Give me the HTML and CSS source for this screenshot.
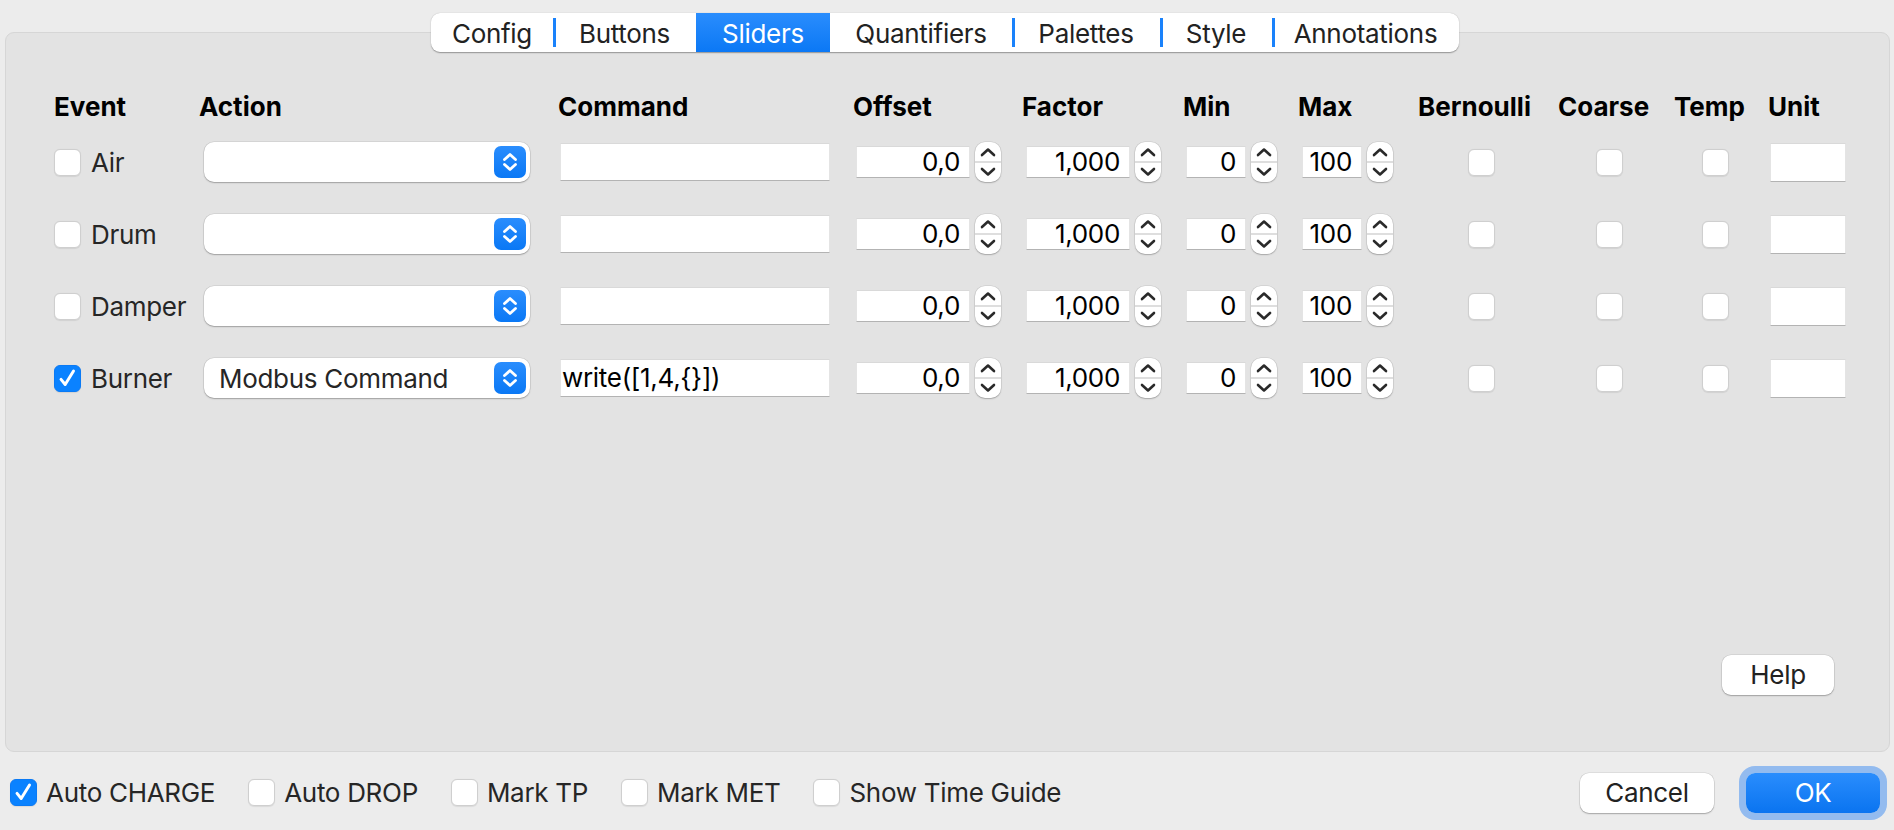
FILE: index.html
```html
<!DOCTYPE html>
<html>
<head>
<meta charset="utf-8">
<link rel="stylesheet" href="styles.css">
</head>
<body>
<div class="window">
  <div class="tabbar">
    <div class="tab t-config">Config</div>
    <div class="tab mark t-buttons">Buttons</div>
    <div class="tab sel t-sliders">Sliders</div>
    <div class="tab t-quant">Quantifiers</div>
    <div class="tab mark t-pal">Palettes</div>
    <div class="tab mark t-style">Style</div>
    <div class="tab mark t-ann">Annotations</div>
  </div>
  <div class="panel">
    <div class="grid hdr">
      <div>Event</div><div>Action</div><div>Command</div><div>Offset</div><div>Factor</div><div>Min</div><div>Max</div><div>Bernoulli</div><div>Coarse</div><div>Temp</div><div>Unit</div>
    </div>
    <div class="grid rows" id="rows"></div>
    <div class="helprow"><button class="btn">Help</button></div>
  </div>
  <div class="bottom">
    <div class="opts">
      <label class="opt"><span class="cb on"><svg viewBox="0 0 27 27"><path d="M6.5 14.5 L11 20 L20 5.5" fill="none" stroke="#fff" stroke-width="3.2" stroke-linecap="round" stroke-linejoin="round"/></svg></span>Auto CHARGE</label>
      <label class="opt"><span class="cb"></span>Auto DROP</label>
      <label class="opt"><span class="cb"></span>Mark TP</label>
      <label class="opt"><span class="cb"></span>Mark MET</label>
      <label class="opt"><span class="cb"></span>Show Time Guide</label>
    </div>
    <div class="actions">
      <button class="btn">Cancel</button>
      <button class="btn ok">OK</button>
    </div>
  </div>
</div>
<template id="rowtpl">
  <div class="c-ev"><span class="cb"></span><span class="lbl"></span></div>
  <div class="c-act"><div class="combo"><span class="ctext"></span><span class="carrow"><svg viewBox="0 0 32 32"><path d="M10.5 13.5 L16 8.5 L21.5 13.5 M10.5 18.5 L16 23.5 L21.5 18.5" fill="none" stroke="#fff" stroke-width="2.8" stroke-linecap="round" stroke-linejoin="round"/></svg></span></div></div>
  <div class="c-cmd"><div class="field cmd"></div></div>
  <div class="c-off"><div class="spin"><div class="field num w-off">0,0</div><div class="step"></div></div></div>
  <div class="c-fac"><div class="spin"><div class="field num w-fac">1,000</div><div class="step"></div></div></div>
  <div class="c-min"><div class="spin"><div class="field num w-min">0</div><div class="step"></div></div></div>
  <div class="c-max"><div class="spin"><div class="field num w-max">100</div><div class="step"></div></div></div>
  <div class="c-ber"><span class="cb"></span></div>
  <div class="c-coa"><span class="cb"></span></div>
  <div class="c-tmp"><span class="cb"></span></div>
  <div class="c-unit"><div class="field unit"></div></div>
</template>
<script src="app.js"></script>
</body>
</html>
```
FILE: app.js
```js
const rows = [
  {name: "Air", on: false, act: "", cmd: ""},
  {name: "Drum", on: false, act: "", cmd: ""},
  {name: "Damper", on: false, act: "", cmd: ""},
  {name: "Burner", on: true, act: "Modbus Command", cmd: "write([1,4,{}])"}
];
const stepSvg = '<svg viewBox="0 0 26 40"><path d="M7 13 L13 7.5 L19 13" fill="none" stroke="#2a2a2a" stroke-width="2.6" stroke-linecap="round" stroke-linejoin="round"/><path d="M7 27 L13 32.5 L19 27" fill="none" stroke="#2a2a2a" stroke-width="2.6" stroke-linecap="round" stroke-linejoin="round"/></svg>';
const check = '<svg viewBox="0 0 27 27"><path d="M6.5 14.5 L11 20 L20 5.5" fill="none" stroke="#fff" stroke-width="3.2" stroke-linecap="round" stroke-linejoin="round"/></svg>';
const host = document.getElementById("rows");
const tpl = document.getElementById("rowtpl");
rows.forEach(r => {
  const frag = tpl.content.cloneNode(true);
  frag.querySelector(".lbl").textContent = r.name;
  if (r.on) {
    const cb = frag.querySelector(".c-ev .cb");
    cb.classList.add("on");
    cb.innerHTML = check;
  }
  frag.querySelector(".ctext").textContent = r.act;
  frag.querySelector(".cmd").textContent = r.cmd;
  frag.querySelectorAll(".step").forEach(s => s.innerHTML = stepSvg);
  host.appendChild(frag);
});
```
FILE: styles.css
```css
* { box-sizing: border-box; }
html, body { margin: 0; padding: 0; }
body {
  width: 1894px;
  height: 830px;
  overflow: hidden;
  background: #ececec;
  font-family: Inter, "Noto Sans", sans-serif;
  font-size: 26px;
  letter-spacing: -0.3px;
  color: #262626;
}
.window { display: flex; flex-direction: column; height: 830px; }

.tabbar {
  position: relative;
  z-index: 2;
  align-self: flex-start;
  margin: 13px 0 0 431px;
  height: 39px;
  display: flex;
  background: #fff;
  border-radius: 9px;
  box-shadow: 0 0.5px 1px rgba(0,0,0,0.25), 0 1px 2px rgba(0,0,0,0.12);
}
.tab {
  position: relative;
  display: flex;
  align-items: center;
  justify-content: center;
  line-height: 1;
  color: #222;
  padding-top: 3px;
}
.t-config { width: 122px; }
.t-buttons { width: 143px; }
.t-sliders { width: 134px; }
.t-quant { width: 182px; }
.t-pal { width: 148px; }
.t-style { width: 112px; }
.t-ann { width: 187px; }
.tab.mark::after {
  content: "";
  position: absolute;
  left: 0; top: 5px; bottom: 5px;
  width: 6px;
  border-radius: 0 6px 6px 0;
  border-left: 3px solid #1a82fb;
}
.tab.sel {
  background: linear-gradient(#2a8dfd, #0b78f5);
  color: #fff;
}

.panel {
  margin: -20px 4px 0 5px;
  height: 720px;
  background: #e3e3e3;
  border: 1px solid #d6d6d6;
  border-radius: 9px;
  padding: 58px 0 0 48px;
  display: flex;
  flex-direction: column;
}
.grid {
  display: grid;
  grid-template-columns: 145px 359px 295px 169px 161px 115px 120px 140px 116px 94px 78px;
}
.hdr {
  height: 32px;
  align-items: center;
  font-weight: 700;
  color: #000;
  line-height: 1;
  letter-spacing: 0;
}
.rows {
  margin-top: 19px;
  grid-auto-rows: 40px;
  row-gap: 32px;
  align-items: center;
}
.rows > div { display: flex; align-items: center; }
.c-ev { gap: 10px; }
.c-act { padding-left: 5px; }
.c-cmd { padding-left: 2px; }
.c-off { padding-left: 3px; }
.c-fac { padding-left: 4px; }
.c-min { padding-left: 3px; }
.c-max { padding-left: 4px; }
.c-ber { padding-left: 50px; }
.c-coa { padding-left: 38px; }
.c-tmp { padding-left: 28px; }
.c-unit { padding-left: 2px; }

.cb {
  width: 27px; height: 27px;
  flex: none;
  display: inline-block;
  background: #fff;
  border: 1px solid #cfcfcf;
  border-radius: 6px;
  box-shadow: 0 0.5px 1px rgba(0,0,0,0.08);
}
.cb.on {
  background: #0a82ff;
  border-color: #0a7af5;
}
.cb svg { display: block; width: 100%; height: 100%; }

.combo {
  width: 326px; height: 40px;
  background: #fff;
  border-radius: 10px;
  box-shadow: 0 0 0 0.5px rgba(0,0,0,0.12), 0 1px 1.5px rgba(0,0,0,0.25);
  display: flex;
  align-items: center;
  padding: 0 4px 0 15px;
}
.ctext { flex: 1; color: #262626; }
.carrow {
  width: 32px; height: 32px;
  border-radius: 7px;
  background: linear-gradient(#2a8dfd, #0a78f5);
}
.carrow svg { display: block; width: 32px; height: 32px; }

.field {
  background: #fff;
  border-top: 1px solid #d9d9d9;
  border-left: 1px solid #e4e4e4;
  border-right: 1px solid #e4e4e4;
  border-bottom: 1.5px solid #b3b3b3;
  line-height: 1;
  color: #000;
}
.cmd { width: 270px; height: 38px; padding: 0 0 0 1px; display: flex; align-items: center; }
.unit { width: 76px; height: 39px; }
.spin { display: flex; align-items: center; gap: 5px; }
.num { height: 32px; display: flex; align-items: center; justify-content: flex-end; padding-right: 9px; }
.w-off { width: 114px; }
.w-fac { width: 104px; }
.w-min { width: 60px; }
.w-max { width: 60px; }
.step {
  width: 26px; height: 40px;
  background: #fff;
  border-radius: 10px;
  box-shadow: 0 0 0 0.5px rgba(0,0,0,0.12), 0 1px 1.5px rgba(0,0,0,0.22);
  position: relative;
}
.step::before {
  content: "";
  position: absolute;
  left: 0; right: 0; top: 19px;
  height: 1.5px;
  background: #dedede;
}
.step svg { position: relative; display: block; width: 26px; height: 40px; }

.helprow {
  margin-top: auto;
  display: flex;
  justify-content: flex-end;
  padding: 0 55px 56px 0;
}
.btn {
  font-family: inherit;
  font-size: 26px;
  letter-spacing: -0.3px;
  color: #222;
  height: 40px;
  border: none;
  background: #fff;
  border-radius: 9px;
  box-shadow: 0 0 0 0.5px rgba(0,0,0,0.12), 0 1px 1.5px rgba(0,0,0,0.25);
  padding: 0;
  line-height: 1;
}
.helprow .btn { width: 112px; }

.bottom {
  flex: 1;
  display: flex;
  align-items: center;
  justify-content: space-between;
  padding: 3px 14px 0 10px;
}
.opts { display: flex; align-items: center; gap: 33px; }
.opt { display: flex; align-items: center; gap: 9px; }
.actions { display: flex; align-items: center; gap: 32px; }
.actions .btn { width: 134px; }
.btn.ok {
  color: #fff;
  background: linear-gradient(#2a8dfd, #0a74f0);
  box-shadow: 0 0 0 7px #93bbef;
}
```
